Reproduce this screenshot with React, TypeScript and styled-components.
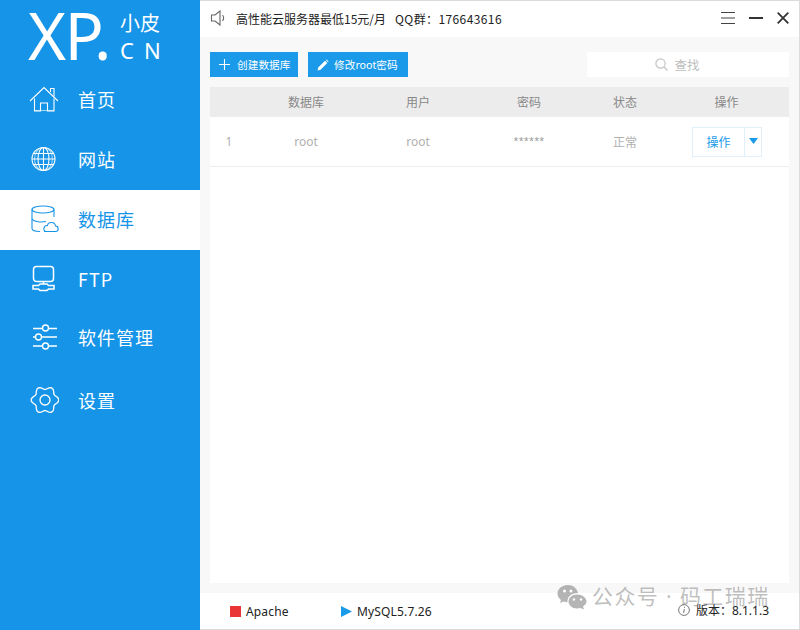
import React from "react";
import styled, { createGlobalStyle } from "styled-components";

const Global = createGlobalStyle`
  html, body { margin: 0; padding: 0; background: #fff; }
  * { box-sizing: border-box; }
  body { font-family: "Noto Sans", "Noto Sans CJK SC", sans-serif; }
`;

const Shell = styled.div`
  position: relative;
  display: flex;
  width: 800px;
  height: 630px;
  overflow: hidden;
`;

const Sidebar = styled.aside`
  width: 200px;
  flex: none;
  background: #1694e8;
  color: #fff;
`;

const Logo = styled.div`
  height: 70px;
  display: flex;
  align-items: flex-start;
  padding: 0 0 0 28px;
`;

const LogoMark = styled.div`
  font-family: "Noto Sans", sans-serif;
  font-size: 65px;
  line-height: 70px;
  letter-spacing: -1.5px;
  width: 92px;
  flex: none;
`;

const LogoSide = styled.div`
  display: flex;
  flex-direction: column;
  padding-top: 9px;
`;

const LogoCn = styled.span`
  font-family: "Noto Sans CJK SC", sans-serif;
  font-size: 20px;
  line-height: 27px;
`;

const LogoEn = styled.span`
  font-size: 22px;
  line-height: 28px;
  letter-spacing: 10px;
  white-space: pre;
`;

const Menu = styled.nav`
  display: flex;
  flex-direction: column;
`;

const MenuItem = styled.div<{ $active?: boolean; $lift: number }>`
  height: 60px;
  display: flex;
  align-items: center;
  padding-left: 29px;
  padding-bottom: ${(p) => p.$lift}px;
  background: ${(p) => (p.$active ? "#fff" : "transparent")};
  color: ${(p) => (p.$active ? "#1694e8" : "#fff")};
`;

const MenuIcon = styled.svg`
  width: 30px;
  height: 30px;
  flex: none;
  margin-right: 19px;
  fill: none;
  stroke: currentColor;
  stroke-width: 1.1;
`;

const MenuLabel = styled.span`
  font-family: "Noto Sans CJK SC", sans-serif;
  font-size: 18px;
  letter-spacing: 1px;
  line-height: 24px;
`;

const Main = styled.main`
  flex: 1;
  min-width: 0;
  display: flex;
  flex-direction: column;
  border-top: 1px solid #dcdcdc;
  border-right: 1px solid #dcdcdc;
  border-bottom: 1px solid #dcdcdc;
`;

const Header = styled.header`
  height: 36px;
  flex: none;
  display: flex;
  align-items: center;
  padding: 0 10px 2px 10px;
  background: #fff;
`;

const Notice = styled.span`
  font-family: "Noto Sans CJK SC", sans-serif;
  font-size: 12px;
  color: #222;
  margin-left: 10px;
  white-space: pre;
`;

const NoticeGroup = styled.span`
  font-family: "Noto Sans CJK SC", sans-serif;
  font-size: 12px;
  color: #222;
  margin-left: 9px;
  letter-spacing: 0.4px;
  white-space: pre;
`;

const WindowControls = styled.div`
  margin-left: auto;
  display: flex;
  align-items: center;
  gap: 14px;
`;

const Glyph = styled.svg`
  flex: none;
  fill: none;
`;

const Content = styled.section`
  flex: 1;
  min-height: 0;
  display: flex;
  flex-direction: column;
  background: #f8f8f8;
  padding: 15px 10px 10px 10px;
`;

const Toolbar = styled.div`
  display: flex;
  align-items: center;
  gap: 10px;
  height: 25px;
  margin-bottom: 10px;
`;

const Action = styled.button<{ $width: number }>`
  width: ${(p) => p.$width}px;
  height: 25px;
  border: 0;
  padding: 0 0 0 9px;
  display: flex;
  align-items: center;
  background: #1a9ae9;
  color: #fff;
  font-family: "Noto Sans", "Noto Sans CJK SC", sans-serif;
  font-size: 10.7px;
  white-space: nowrap;
`;

const Search = styled.div`
  margin-left: auto;
  width: 202px;
  height: 25px;
  background: #fff;
  display: flex;
  align-items: center;
  justify-content: center;
  gap: 6px;
  color: #bdbdbd;
  font-family: "Noto Sans CJK SC", sans-serif;
  font-size: 12.5px;
  padding-right: 21px;
`;

const Table = styled.div`
  flex: 1;
  background: #fff;
`;

const Row = styled.div<{ $head?: boolean }>`
  display: grid;
  grid-template-columns: 38px 116px 108px 114px 78px 125px;
  align-items: center;
  justify-items: center;
  height: ${(p) => (p.$head ? "30px" : "50px")};
  background: ${(p) => (p.$head ? "#ececec" : "#fff")};
  border-bottom: ${(p) => (p.$head ? "0" : "1px solid #eee")};
  color: ${(p) => (p.$head ? "#888" : "#b0b0b0")};
  font-family: "Noto Sans", "Noto Sans CJK SC", sans-serif;
  font-size: 12px;
`;

const Stars = styled.span`
  font-size: 9px;
  color: #999;
  letter-spacing: 0.2px;
  margin-bottom: 3px;
`;

const Split = styled.div`
  display: flex;
  height: 30px;
  width: 70px;
  margin-left: 1px;
  border: 1px solid #dff0fb;
  background: #fff;
`;

const SplitMain = styled.span`
  flex: 1;
  display: flex;
  align-items: center;
  justify-content: center;
  color: #1a9ae9;
  font-size: 12px;
  padding-top: 1px;
  border-right: 1px solid #dff0fb;
`;

const SplitCaret = styled.span`
  width: 16px;
  display: flex;
  justify-content: center;
  padding-top: 10px;
`;

const Footer = styled.footer`
  height: 36px;
  flex: none;
  display: flex;
  align-items: center;
  background: #fff;
  padding: 0 30px 0 30px;
  color: #222;
  font-family: "Noto Sans", "Noto Sans CJK SC", sans-serif;
  font-size: 12px;
`;

const Service = styled.div<{ $width: number }>`
  width: ${(p) => p.$width}px;
  display: flex;
  align-items: center;
  gap: 5px;
  letter-spacing: 0.15px;
  white-space: nowrap;
`;

const Version = styled.div`
  margin-left: auto;
  display: flex;
  align-items: center;
  gap: 6px;
  padding-bottom: 2px;
`;

const Watermark = styled.div`
  position: absolute;
  left: 557px;
  top: 582px;
  display: flex;
  align-items: center;
  gap: 5px;
  color: rgba(120, 120, 120, 0.48);
  font-family: "Noto Sans", "Noto Sans CJK SC", sans-serif;
  font-size: 21px;
  letter-spacing: 1.4px;
  line-height: 29px;
  white-space: pre;
  pointer-events: none;
`;

const HomeIcon = () => (
  <MenuIcon viewBox="0 0 30 30">
    <path d="M1 17 L15 3.5 L29 17" />
    <path d="M21.5 8 V4.5 H25 V12.5" />
    <path d="M5.5 14.5 V27 H11.5 V19 H18.5 V27 H25 V14.5" />
    <path d="M5.5 26.5 H25" opacity="0.6" />
  </MenuIcon>
);

const GlobeIcon = () => (
  <MenuIcon viewBox="0 0 30 30">
    <circle cx="14.5" cy="15" r="11.5" />
    <ellipse cx="14.5" cy="15" rx="5.5" ry="11.5" />
    <path d="M14.5 3.5 V26.5 M3 15 H26 M4.5 9.5 H24.5 M4.5 20.5 H24.5" />
    <ellipse cx="14.5" cy="15" rx="9" ry="11.5" opacity="0.6" />
  </MenuIcon>
);

const DatabaseIcon = () => (
  <MenuIcon viewBox="0 0 30 30">
    <ellipse cx="14" cy="5.5" rx="11" ry="3.5" />
    <path d="M3 5.5 V24.5 C3 26.5 7 27.5 11 27.5" />
    <path d="M25 5.5 V13" />
    <path d="M3 15 C5 18 12 18.5 17 17.5" />
    <path d="M15 27.5 H26.5 C30 27.5 30 22 26.5 22 C26 17.5 19 17.5 18.5 21.5 C14.5 21 13.5 27.5 17 27.5" />
  </MenuIcon>
);

const FtpIcon = () => (
  <MenuIcon viewBox="0 0 30 30">
    <rect x="4.5" y="2.5" width="20" height="15" rx="3" strokeWidth="1.5" />
    <path d="M14.5 17.5 V20" strokeWidth="1.5" />
    <path d="M4 21.5 H9.5 L11 20 H18 L19.5 21.5 H25 V25 H19.5 L18 26.5 H11 L9.5 25 H4 Z" strokeWidth="1.5" />
  </MenuIcon>
);

const SlidersIcon = () => (
  <MenuIcon viewBox="0 0 30 30">
    <path d="M4 6.5 H13 M20 6.5 H28 M4 15 H6 M13 15 H28 M4 24 H13 M20 24 H28" strokeWidth="1.4" />
    <circle cx="16.5" cy="6" r="3" strokeWidth="1.4" />
    <circle cx="9.5" cy="15" r="3" strokeWidth="1.4" />
    <circle cx="16.5" cy="24" r="3" strokeWidth="1.4" />
  </MenuIcon>
);

const gearOutline = Array.from({ length: 96 }, (_, i) => {
  const a = (i / 96) * Math.PI * 2;
  const r = 12.2 + 1.6 * Math.cos(6 * a);
  return `${(16 + r * Math.cos(a)).toFixed(2)},${(15 + r * Math.sin(a)).toFixed(2)}`;
}).join(" ");

const GearIcon = () => (
  <MenuIcon viewBox="0 0 30 30">
    <circle cx="16" cy="15" r="5" strokeWidth="1.3" />
    <polygon points={gearOutline} strokeWidth="1.3" strokeLinejoin="round" />
  </MenuIcon>
);

const items = [
  { label: "首页", icon: <HomeIcon />, lift: 2 },
  { label: "网站", icon: <GlobeIcon />, lift: 2 },
  { label: "数据库", icon: <DatabaseIcon />, active: true, lift: 2 },
  { label: "FTP", icon: <FtpIcon />, lift: 2 },
  { label: "软件管理", icon: <SlidersIcon />, lift: 6 },
  { label: "设置", icon: <GearIcon />, lift: 1 },
];

export default function App() {
  return (
    <Shell>
      <Global />
      <Sidebar>
        <Logo>
          <LogoMark>XP.</LogoMark>
          <LogoSide>
            <LogoCn>小皮</LogoCn>
            <LogoEn>CN</LogoEn>
          </LogoSide>
        </Logo>
        <Menu>
          {items.map((it) => (
            <MenuItem key={it.label} $active={it.active} $lift={it.lift}>
              {it.icon}
              <MenuLabel>{it.label}</MenuLabel>
            </MenuItem>
          ))}
        </Menu>
      </Sidebar>
      <Main>
        <Header>
          <Glyph width="16" height="16" viewBox="0 0 16 16" stroke="#666" strokeWidth="1.1">
            <path d="M1.5 5 H5 L10 1 V15 L5 11 H1.5 Z" />
            <path d="M12.5 5 C14 7 14 9 12.5 11" />
          </Glyph>
          <Notice>高性能云服务器最低15元/月</Notice>
          <NoticeGroup>QQ群：176643616</NoticeGroup>
          <WindowControls>
            <Glyph width="14" height="12" viewBox="0 0 14 12" stroke="#444" strokeWidth="1">
              <path d="M0 .5 H14 M0 6 H14 M0 11.5 H14" />
            </Glyph>
            <Glyph width="14" height="12" viewBox="0 0 14 12" stroke="#333" strokeWidth="2">
              <path d="M0 6 H14" />
            </Glyph>
            <Glyph width="12" height="12" viewBox="0 0 12 12" stroke="#333" strokeWidth="1.8">
              <path d="M.7 .7 L11.3 11.3 M11.3 .7 L.7 11.3" />
            </Glyph>
          </WindowControls>
        </Header>
        <Content>
          <Toolbar>
            <Action $width={88}>
              <Glyph width="11" height="11" viewBox="0 0 11 11" stroke="#fff" strokeWidth="1.1" style={{ marginRight: 7 }}>
                <path d="M5.5 0 V11 M0 5.5 H11" />
              </Glyph>
              创建数据库
            </Action>
            <Action $width={100}>
              <Glyph width="12" height="12" viewBox="0 0 12 12" style={{ marginRight: 5 }}>
                <path d="M0.5 11.5 L1.2 8.5 L8 1.7 L10.3 4 L3.5 10.8 Z M8.8 1 L9.6 .4 L11.6 2.4 L11 3.2 Z" fill="#fff" />
              </Glyph>
              修改root密码
            </Action>
            <Search>
              <Glyph width="13" height="13" viewBox="0 0 13 13" stroke="#c4c4c4" strokeWidth="1.2">
                <circle cx="5.5" cy="5.5" r="4.6" />
                <path d="M9 9 L12.5 12.5" />
              </Glyph>
              查找
            </Search>
          </Toolbar>
          <Table>
            <Row $head>
              <span />
              <span>数据库</span>
              <span>用户</span>
              <span>密码</span>
              <span>状态</span>
              <span>操作</span>
            </Row>
            <Row>
              <span>1</span>
              <span>root</span>
              <span>root</span>
              <Stars>******</Stars>
              <span>正常</span>
              <Split>
                <SplitMain>操作</SplitMain>
                <SplitCaret>
                  <Glyph width="9" height="6" viewBox="0 0 9 6">
                    <path d="M0 0 H9 L4.5 6 Z" fill="#1a9ae9" />
                  </Glyph>
                </SplitCaret>
              </Split>
            </Row>
          </Table>
        </Content>
        <Footer>
          <Service $width={111}>
            <Glyph width="11" height="11" viewBox="0 0 11 11">
              <rect width="11" height="11" fill="#e93535" />
            </Glyph>
            Apache
          </Service>
          <Service $width={120}>
            <Glyph width="11" height="11" viewBox="0 0 11 11">
              <path d="M0 0 L11 5.5 L0 11 Z" fill="#1a9ae9" />
            </Glyph>
            MySQL5.7.26
          </Service>
          <Version>
            <Glyph width="12" height="12" viewBox="0 0 12 12" stroke="#777" strokeWidth="1">
              <circle cx="6" cy="6" r="5.4" />
              <path d="M6.3 5 L5.6 9 M6.5 2.8 V3.8" />
            </Glyph>
            版本：8.1.1.3
          </Version>
        </Footer>
      </Main>
      <Watermark>
        <Glyph width="30" height="26" viewBox="0 0 30 26">
          <path d="M11 1 C5 1 0.5 5 0.5 9.5 C0.5 12.5 2 14.5 4 16 L3 19 L6.5 17.5 C8 18 9 18.2 10.5 18.2 C10 13 14 9 21 9 C20 4.5 16 1 11 1 Z" fill="rgba(120,120,120,.55)" />
          <path d="M20 10.5 C15 10.5 11.5 14 11.5 17.5 C11.5 21 15 24.5 20 24.5 C21 24.5 22 24.3 23.5 24 L27 25.5 L26 22.5 C28 21 29.5 19.5 29.5 17.5 C29.5 14 25.5 10.5 20 10.5 Z" fill="rgba(120,120,120,.55)" />
          <circle cx="7.5" cy="7" r="1.5" fill="#fff" />
          <circle cx="14" cy="7" r="1.5" fill="#fff" />
          <circle cx="17" cy="15.5" r="1.2" fill="#fff" />
          <circle cx="24" cy="15.5" r="1.2" fill="#fff" />
        </Glyph>
        公众号 · 码工瑞瑞
      </Watermark>
    </Shell>
  );
}
